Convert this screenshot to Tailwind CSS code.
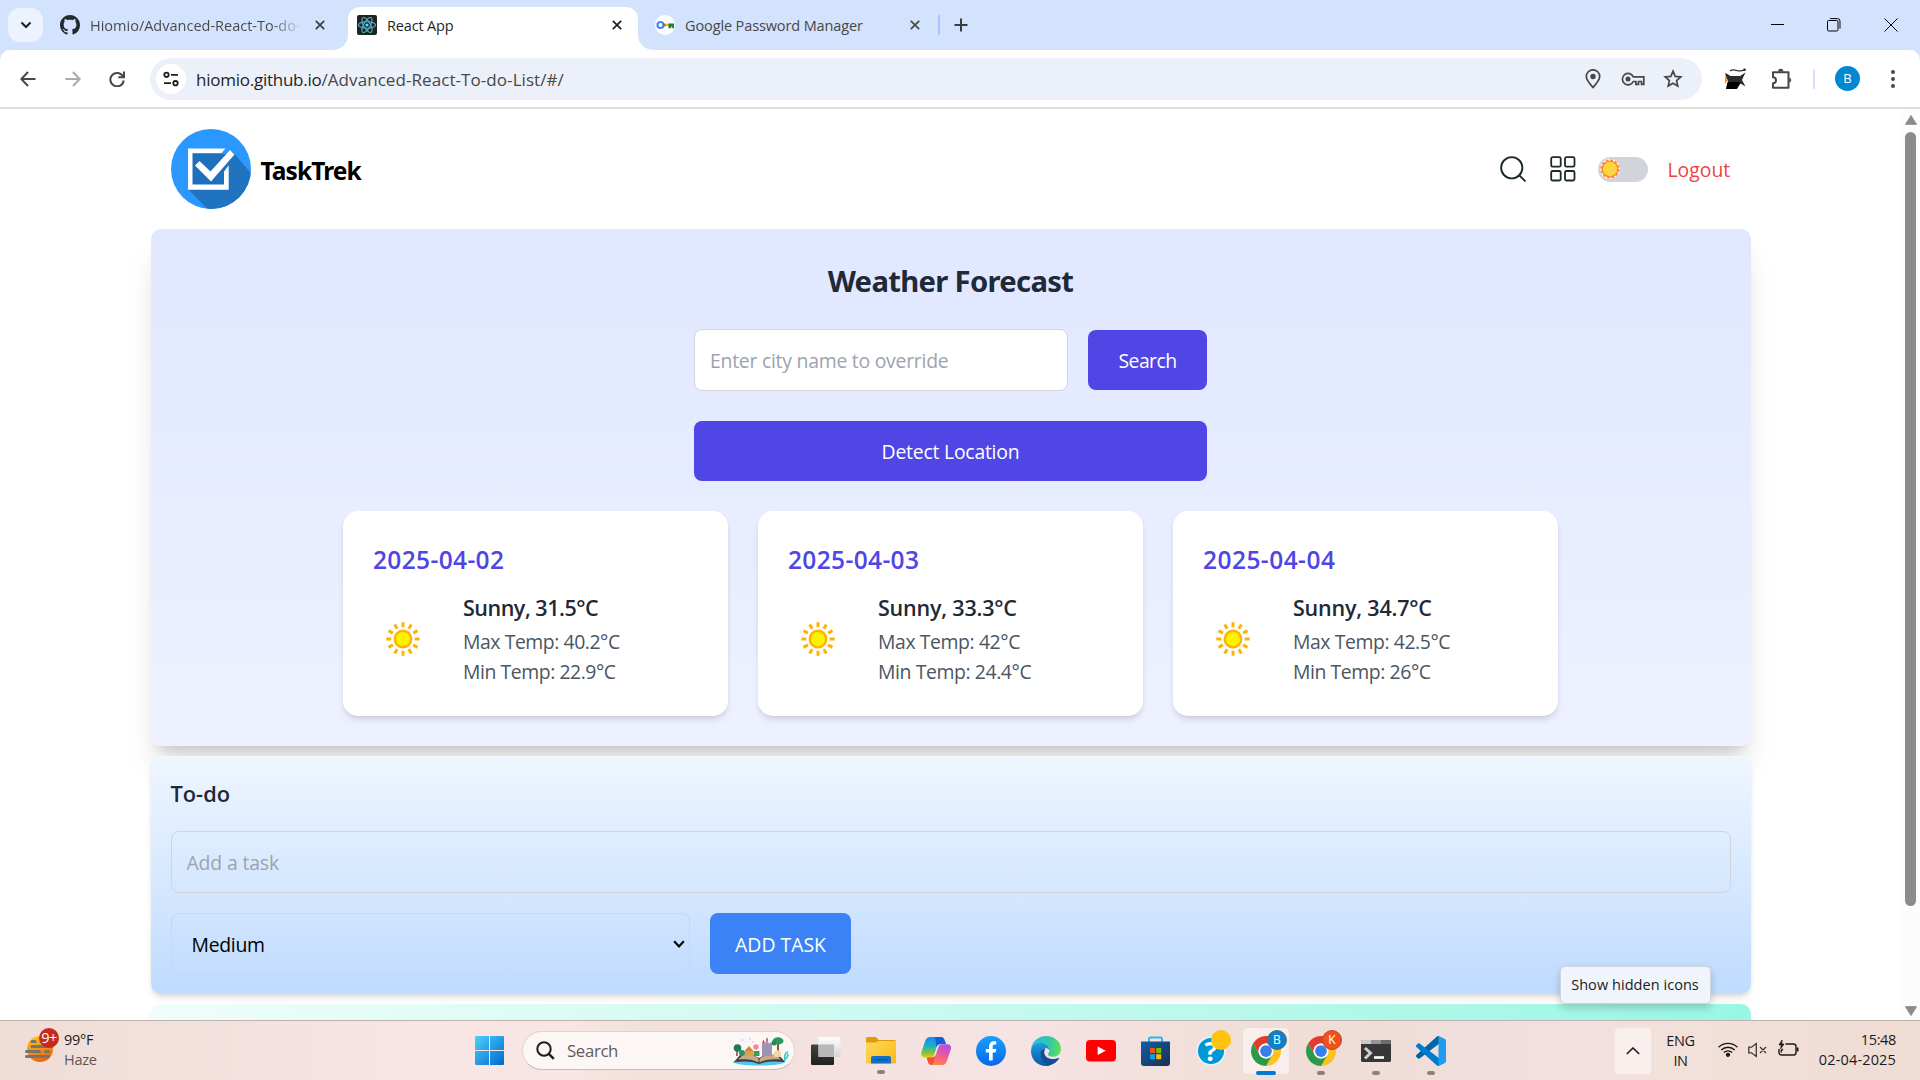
<!DOCTYPE html>
<html lang="en">
<head>
<meta charset="utf-8">
<title>React App</title>
<script src="https://cdn.jsdelivr.net/npm/@tailwindcss/browser@4"></script>
</head>
<body class="w-[1920px] h-[1080px] overflow-hidden bg-white font-['Open_Sans','Noto_Sans',sans-serif] flex flex-col">
<svg class="hidden">
  <symbol id="sun" viewBox="0 0 80 80">
    <g stroke="#ffb300" stroke-width="3">
      <path d="M40 23.3v5M40 51.7v5"/>
      <path d="M40 23.3v5M40 51.7v5" transform="rotate(30 40 40)"/>
      <path d="M40 23.3v5M40 51.7v5" transform="rotate(60 40 40)"/>
      <path d="M40 23.3v5M40 51.7v5" transform="rotate(90 40 40)"/>
      <path d="M40 23.3v5M40 51.7v5" transform="rotate(120 40 40)"/>
      <path d="M40 23.3v5M40 51.7v5" transform="rotate(150 40 40)"/>
    </g>
    <circle cx="40" cy="40" r="8.2" fill="#fff100" stroke="#ffb300" stroke-width="2.4"/>
  </symbol>
  <symbol id="chrome" viewBox="0 0 48 48">
    <path d="M3.22 12A24 24 0 0 1 44.78 12H24A12 12 0 0 0 13.61 30z" fill="#e33b2e"/>
    <path d="M44.78 12A24 24 0 0 1 24 48L34.39 30A12 12 0 0 0 24 12z" fill="#fcc31e"/>
    <path d="M24 48A24 24 0 0 1 3.22 12L13.61 30A12 12 0 0 0 34.39 30z" fill="#2b9a48"/>
    <circle cx="24" cy="24" r="12" fill="#fff"/><circle cx="24" cy="24" r="9.4" fill="#3b7ded"/>
  </symbol>
  <symbol id="x" viewBox="0 0 10 10"><path d="M.8.8l8.4 8.4M9.2.8L.8 9.2" stroke="currentColor" stroke-width="1.7" fill="none"/></symbol>
</svg>

<!-- Browser tab strip -->
<div class="h-[50px] shrink-0 bg-[#d3e3fd] flex items-stretch text-[14.5px] text-[#474747]">
  <div class="w-[348px] flex items-center pl-2">
    <div class="w-[35px] h-[34px] rounded-xl bg-[#ecf2fe] flex items-center justify-center">
      <svg class="w-3 h-3 text-[#1f1f1f]" viewBox="0 0 12 12"><path d="M1.5 3.5L6 8l4.500-4.500" fill="none" stroke="currentColor" stroke-width="2"/></svg>
    </div>
    <svg class="w-5 h-5 ml-[17px] shrink-0" viewBox="0 0 16 16" fill="#24292f"><path d="M8 0C3.580 0 0 3.580 0 8c0 3.540 2.290 6.530 5.470 7.590.4.070.550-.170.550-.380 0-.190-.010-.820-.010-1.490-2.010.370-2.530-.490-2.690-.940-.090-.230-.480-.940-.820-1.130-.280-.150-.680-.520-.010-.530.630-.010 1.080.580 1.230.820.720 1.210 1.870.870 2.330.660.070-.520.280-.870.510-1.070-1.780-.2-3.640-.890-3.640-3.950 0-.870.310-1.590.820-2.150-.080-.2-.360-1.020.080-2.120 0 0 .670-.210 2.200.820.640-.180 1.320-.270 2-.270s1.360.090 2 .270c1.530-1.040 2.200-.820 2.200-.820.440 1.100.160 1.920.080 2.120.510.560.820 1.270.820 2.150 0 3.070-1.870 3.750-3.650 3.950.290.250.540.730.540 1.480 0 1.070-.010 1.930-.010 2.200 0 .210.150.460.550.380A8.010 8.010 0 0 0 16 8c0-4.420-3.580-8-8-8z"/></svg>
    <span class="ml-[10px] w-[212px] whitespace-nowrap pt-px bg-linear-to-r from-[#474747] from-85% to-transparent to-100% bg-clip-text text-transparent">Hiomio/Advanced-React-To-do-</span>
    <svg class="w-[10px] h-[10px] ml-[13px] text-[#3c3c3c]"><use href="#x"/></svg>
  </div>
  <div class="relative w-[290px] mt-[7px] bg-white rounded-t-[12px] flex items-center pl-[9px] pb-[7px] text-[#1f1f1f]">
    <svg class="absolute bottom-0 -left-[15px] w-[15px] h-[15px]" viewBox="0 0 15 15"><path d="M15 0v15H0A15 15 0 0 0 15 0" fill="#fff"/></svg>
    <svg class="absolute bottom-0 -right-[15px] w-[15px] h-[15px]" viewBox="0 0 15 15"><path d="M0 0v15h15A15 15 0 0 1 0 0" fill="#fff"/></svg>
    <svg class="w-5 h-5" viewBox="0 0 20 20"><rect width="20" height="20" rx="2" fill="#222"/><g fill="none" stroke="#4fb8d3" stroke-width="1.1"><ellipse cx="10" cy="10" rx="8.500" ry="3.300"/><ellipse cx="10" cy="10" rx="8.500" ry="3.300" transform="rotate(60 10 10)"/><ellipse cx="10" cy="10" rx="8.500" ry="3.300" transform="rotate(120 10 10)"/></g><circle cx="10" cy="10" r="1.600" fill="#61dafb"/></svg>
    <span class="ml-[10px] w-[225px] tracking-[-0.17px] pt-px">React App</span>
    <svg class="w-[10px] h-[10px]"><use href="#x"/></svg>
  </div>
  <div class="flex items-center pl-[17px]">
    <svg class="w-5 h-5" viewBox="0 0 20 20"><circle cx="10" cy="10" r="10" fill="#fff"/><circle cx="5.500" cy="10" r="3" fill="none" stroke="#4285f4" stroke-width="2.200"/><path d="M8 8.800h3v2.400H8z" fill="#ea4335"/><path d="M10.500 8.800h3.500v2.400h-3.500z" fill="#fbbc04"/><path d="M13.500 8.600h5.500v4.600h-1.800v-1.800h-1v1.800h-2.700z" fill="#188038"/></svg>
    <span class="ml-[10px] w-[225px] tracking-[-0.12px] pt-px">Google Password Manager</span>
    <svg class="w-[10px] h-[10px]"><use href="#x"/></svg>
    <div class="w-[2px] h-5 bg-[#a8c7fa] ml-[18px]"></div>
    <svg class="w-[14px] h-[14px] ml-[14px]" viewBox="0 0 14 14"><path d="M7 .5v13M.5 7h13" stroke="#3c3c3c" stroke-width="2"/></svg>
  </div>
  <div class="ml-auto flex items-center pr-[22px] text-black">
    <svg class="w-[13px] h-[13px]" viewBox="0 0 13 13"><path d="M0 5.500h13" stroke="currentColor"/></svg>
    <svg class="w-[14px] h-[14px] ml-[43px]" viewBox="0 0 14 14" fill="none" stroke="currentColor"><rect x=".5" y="2.500" width="10.500" height="10.500" rx="1.200"/><path d="M3 .6h7.500a2.500 2.500 0 0 1 2.500 2.500v7.500"/></svg>
    <svg class="w-[14px] h-[14px] ml-[43px]" viewBox="0 0 14 14" stroke="currentColor"><path d="M.5.5l13 13M13.500.5l-13 13"/></svg>
  </div>
</div>

<!-- Toolbar -->
<div class="h-[59px] shrink-0 bg-[#d3e3fd]">
<div class="h-full bg-white rounded-t-[10px] border-b-2 border-[#dfdfdf] flex items-center pl-5 text-[#474747]">
  <svg class="w-4 h-4" viewBox="0 0 16 16" fill="none" stroke="currentColor" stroke-width="2"><path d="M15.500 8H1.500M8 1L1.300 8 8 15"/></svg>
  <svg class="w-4 h-4 ml-[29px] text-[#ababab]" viewBox="0 0 16 16" fill="none" stroke="currentColor" stroke-width="2"><path d="M.5 8h14M8 1l6.700 7L8 15"/></svg>
  <svg class="w-4 h-4 ml-[28px]" viewBox="0 0 16 16" fill="none" stroke="currentColor" stroke-width="2"><path d="M14 5.500A6.700 6.700 0 1 0 14.700 9.500"/><path d="M15 .5v5.700H9.300"/></svg>
  <div class="ml-[25px] w-[1552px] h-[42px] rounded-full bg-[#ecf0f9] flex items-center pl-[6px] pr-[19px]">
    <div class="w-[30px] h-[30px] rounded-full bg-white flex items-center justify-center">
      <svg class="w-4 h-4" viewBox="0 0 16 16" fill="none" stroke="#1f1f1f" stroke-width="1.800"><circle cx="3.500" cy="3.800" r="2.200"/><path d="M8 3.800h7M1 12.200h7"/><circle cx="12.500" cy="12.200" r="2.200"/></svg>
    </div>
    <div class="ml-[10px] text-[17px] tracking-[0.07px] whitespace-nowrap pt-[2px]"><span class="text-[#1f1f1f] tracking-[-0.25px]">hiomio.github.io</span>/Advanced-React-To-do-List/#/</div>
    <div class="ml-auto flex items-center">
      <svg class="w-[16px] h-[20px]" viewBox="0 0 16 20"><path d="M8 18.500C4 14 1.300 11 1.300 7.500a6.700 6.700 0 0 1 13.400 0C14.700 11 12 14 8 18.500z" fill="none" stroke="currentColor" stroke-width="1.700"/><circle cx="8" cy="7.500" r="2.700" fill="currentColor"/></svg>
      <svg class="w-[24px] h-[14px] ml-[20px]" viewBox="0 0 24 14"><path d="M12.300 4.800h10.500v7.500h-2.300V9.500h-3v2.800h-2.600V9.500h-2.600a5.700 5.700 0 1 1 0-4.700z" fill="none" stroke="currentColor" stroke-width="1.700"/><circle cx="7" cy="7" r="2.500" fill="currentColor"/></svg>
      <svg class="w-[20px] h-[20px] ml-[18px]" viewBox="0 0 20 20"><path d="M10 2.200l2.200 5.200 5.600.5-4.200 3.700 1.200 5.500L10 14.200l-4.800 2.900 1.200-5.500L2.200 7.900l5.600-.5z" fill="none" stroke="currentColor" stroke-width="1.700"/></svg>
    </div>
  </div>
  <svg class="w-[22px] h-[22px] ml-[23px]" viewBox="0 0 22 22"><path d="M0 5.500h1.500l4 2.500h9.500l5.500-3.500-3.500 7.500 3.500 6.500-5-3-3.500 5.500H1l3-6-2-3.500z" fill="#2b2b2b"/><path d="M2.500 14h13l-4 7H1z" fill="#000"/><path d="M5 3c4-3.500 8 2 14-1" stroke="#333" stroke-width="1.300" fill="none"/><circle cx="19.500" cy="1.800" r="1.300" fill="#222"/><path d="M0 8l3 4-3 4z" fill="#f9922a"/></svg>
  <svg class="w-[22px] h-[22px] ml-[23px]" viewBox="0 0 22 22"><path d="M3 4.200h15.500v15.500H3v-4.500a3 3 0 0 0 0-6z" fill="none" stroke="currentColor" stroke-width="2" stroke-linejoin="round"/><path d="M8 3.500a2.700 2.700 0 0 1 5.400 0zM19.300 9.500a2.700 2.700 0 0 1 0 5.200z" fill="currentColor"/></svg>
  <div class="w-[2px] h-5 bg-[#d3e3fd] ml-[21px]"></div>
  <div class="w-[25px] h-[25px] rounded-full bg-[#0288d1] text-white text-[13px] leading-none flex items-center justify-center ml-[20px]">B</div>
  <svg class="w-[4px] h-[18px] ml-[31px]" viewBox="0 0 4 18" fill="currentColor"><circle cx="2" cy="2" r="2"/><circle cx="2" cy="9" r="2"/><circle cx="2" cy="16" r="2"/></svg>
</div>
</div>

<!-- Page viewport -->
<div class="h-[911px] shrink-0 overflow-hidden flex bg-white">
  <main class="w-[1901px] px-[150.500px] flex flex-col gap-[10px]">
    <header class="h-[110px] shrink-0 px-5 pt-5 flex items-start">
      <svg class="w-20 h-20" viewBox="0 0 80 80"><defs><clipPath id="disc"><circle cx="40" cy="40" r="40"/></clipPath></defs><g clip-path="url(#disc)"><path d="M0 0h80v80H0z" fill="#2a98ff"/><path d="M61 22L90 56V90H46L17 60z" fill="#2074bf"/><path d="M21 25h34v32H21z" fill="#1d70bd"/></g><path d="M17 19.500h37.500L50.500 24H21.500v31.500H53V42.500l4.700-6v24.200H17z" fill="#fff"/><path d="M24 36.500l4.500-4.500L39.500 42.500 59 21l4.500 4.500L40 52.500z" fill="#fff"/></svg>
      <div class="ml-[10px] h-20 flex items-center pt-[5px] text-[24.500px] font-bold tracking-[-0.9px] text-black font-['Noto_Sans',sans-serif]">TaskTrek</div>
      <div class="ml-auto h-20 flex items-center text-[#1c2b22]">
        <svg class="w-[30px] h-[30px]" viewBox="0 0 24 24" fill="none" stroke="currentColor" stroke-width="1.500" stroke-linecap="round"><circle cx="11" cy="11" r="8.500"/><path d="M17.300 17.300l4.200 4.200"/></svg>
        <svg class="w-[26px] h-[26px] ml-[22px]" viewBox="0 0 26 26" fill="none" stroke="currentColor" stroke-width="1.800"><rect x="1.200" y="1.200" width="9.500" height="9.500" rx="1.500"/><rect x="15" y="1.200" width="9.500" height="9.500" rx="1.500"/><rect x="1.200" y="15" width="9.500" height="9.500" rx="1.500"/><rect x="15" y="15" width="9.500" height="9.500" rx="1.500"/></svg>
        <div class="ml-[22px] w-[50px] h-[25px] rounded-full bg-[#d1d5db] flex items-center pl-[2px]">
          <svg class="w-5 h-5" viewBox="0 0 20 20"><circle cx="10" cy="10" r="10" fill="#fff"/><circle cx="10" cy="10" r="8.900" fill="none" stroke="#ff8736" stroke-width="1.500" stroke-dasharray="2.800 1.860"/><circle cx="10" cy="10" r="7.900" fill="#fdd53f" stroke="#ff8736" stroke-width="1.400"/></svg>
        </div>
        <div class="ml-[20px] text-[19.400px] text-[#ef4444] pt-[2px] w-[63px]">Logout</div>
      </div>
    </header>

    <section class="h-[517px] shrink-0 rounded-[10px] bg-linear-to-b from-[#e0e7ff] to-[#eef2ff] shadow-[0_25px_31px_-6px_rgba(0,0,0,0.13),0_10px_12px_-7px_rgba(0,0,0,0.13)] flex flex-col items-center pt-[30px]">
      <h2 class="h-[45px] leading-[44px] text-[29.200px] font-bold tracking-[-0.66px] text-[#1f2937] font-['Noto_Sans',sans-serif]">Weather Forecast</h2>
      <div class="w-[513px] mt-[25px] flex items-center gap-5">
        <input placeholder="Enter city name to override" class="w-[374px] h-[62px] rounded-lg border border-[#d1d5db] bg-white px-[15px] pt-px text-[19.400px] tracking-[-0.25px] placeholder:text-[#9ca3af]">
        <button class="w-[119px] h-[60px] rounded-lg bg-[#4f46e5] text-white text-[19.400px] tracking-[-0.57px] pt-px">Search</button>
      </div>
      <button class="w-[513px] h-[60px] mt-[30px] shrink-0 rounded-lg bg-[#4f46e5] text-white text-[19.400px] tracking-[-0.23px] pt-px">Detect Location</button>
      <div class="flex gap-[30px] mt-[30px]">
        <article class="w-[385px] h-[205px] rounded-[15px] bg-white p-[30px] shadow-[0_5px_7px_-1px_rgba(0,0,0,0.1),0_2px_5px_-2px_rgba(0,0,0,0.1)]">
          <h3 class="h-[38px] leading-[38px] text-[24.500px] font-semibold tracking-[0.35px] text-[#4f46e5]">2025-04-02</h3>
          <div class="mt-[11px] -ml-[10px] flex items-center gap-5">
            <svg class="w-20 h-20"><use href="#sun"/></svg>
            <div class="text-[19.400px] leading-[30px] text-[#4b5563] tracking-[-0.44px]">
              <p class="h-[37px] leading-[35px] text-[21.500px] font-semibold text-[#1f2937] tracking-[-0.48px]">Sunny, 31.5°C</p><p>Max Temp: 40.2°C</p><p>Min Temp: 22.9°C</p>
            </div>
          </div>
        </article>
        <article class="w-[385px] h-[205px] rounded-[15px] bg-white p-[30px] shadow-[0_5px_7px_-1px_rgba(0,0,0,0.1),0_2px_5px_-2px_rgba(0,0,0,0.1)]">
          <h3 class="h-[38px] leading-[38px] text-[24.500px] font-semibold tracking-[0.35px] text-[#4f46e5]">2025-04-03</h3>
          <div class="mt-[11px] -ml-[10px] flex items-center gap-5">
            <svg class="w-20 h-20"><use href="#sun"/></svg>
            <div class="text-[19.400px] leading-[30px] text-[#4b5563] tracking-[-0.4px]">
              <p class="h-[37px] leading-[35px] text-[21.500px] font-semibold text-[#1f2937] tracking-[-0.2px]">Sunny, 33.3°C</p><p>Max Temp: 42°C</p><p>Min Temp: 24.4°C</p>
            </div>
          </div>
        </article>
        <article class="w-[385px] h-[205px] rounded-[15px] bg-white p-[30px] shadow-[0_5px_7px_-1px_rgba(0,0,0,0.1),0_2px_5px_-2px_rgba(0,0,0,0.1)]">
          <h3 class="h-[38px] leading-[38px] text-[24.500px] font-semibold tracking-[0.45px] text-[#4f46e5]">2025-04-04</h3>
          <div class="mt-[11px] -ml-[10px] flex items-center gap-5">
            <svg class="w-20 h-20"><use href="#sun"/></svg>
            <div class="text-[19.400px] leading-[30px] text-[#4b5563] tracking-[-0.42px]">
              <p class="h-[37px] leading-[35px] text-[21.500px] font-semibold text-[#1f2937] tracking-[-0.2px]">Sunny, 34.7°C</p><p>Max Temp: 42.5°C</p><p>Min Temp: 26°C</p>
            </div>
          </div>
        </article>
      </div>
    </section>

    <section class="relative h-[238px] shrink-0 rounded-[10px] bg-linear-to-b from-[#eff6ff] to-[#bfdbfe] shadow-[0_5px_7px_-1px_rgba(0,0,0,0.1),0_2px_5px_-2px_rgba(0,0,0,0.1)] p-5">
      <h2 class="h-[35px] leading-[36px] text-[21.800px] font-semibold tracking-[0px] text-[#1f2937]">To-do</h2>
      <input placeholder="Add a task" class="block mt-[20px] w-full h-[62px] rounded-[8px] border border-[#cfd4df] bg-transparent px-[15px] pt-px text-[19.400px] tracking-[-0.15px] placeholder:text-[#9ca3af]">
      <div class="mt-5 flex gap-5">
        <div class="w-[519px] h-[61px] rounded-[8px] border border-[#cbd6e8] flex items-center justify-between pl-[20px] pr-[4px] text-[19.400px] tracking-[-0.3px] text-black"><span class="pt-[3px]">Medium</span>
          <svg class="w-3 h-3" viewBox="0 0 12 12"><path d="M1.200 3.300L6 8.500l4.800-5.200" fill="none" stroke="#000" stroke-width="2.200"/></svg>
        </div>
        <button class="w-[141px] h-[61px] rounded-[8px] bg-[#3b82f6] text-white text-[19.400px] pt-[2px] pl-px">ADD TASK</button>
      </div>
    </section>
    <section class="relative h-20 shrink-0 rounded-[10px] bg-linear-to-r from-[#f0fdfa] to-[#99f6e4] shadow-[0_5px_7px_-1px_rgba(0,0,0,0.1)]"></section>
  </main>
  <div class="w-[19px] bg-[#fcfcfc] flex flex-col items-center pt-[6px] pb-[4px]">
    <svg class="w-3 h-[10px] shrink-0" viewBox="0 0 12 10"><path d="M6 .5L11.500 9.300H.5z" fill="#8b8b8b" stroke="#8b8b8b" stroke-linejoin="round"/></svg>
    <div class="w-[11px] h-[774px] mt-[7px] rounded-full bg-[#8b8b8b]"></div>
    <svg class="w-3 h-[10px] shrink-0 mt-auto" viewBox="0 0 12 10"><path d="M6 9.500L11.500.7H.5z" fill="#8b8b8b" stroke="#8b8b8b" stroke-linejoin="round"/></svg>
  </div>
</div>

<!-- Windows taskbar -->
<div class="relative h-[60px] shrink-0 border-t border-[#bdb1af] bg-[linear-gradient(90deg,#eeded6_0%,#f2e0dd_9%,#f8e5e4_22%,#f8e5e4_30%,#f3e1db_33%,#f4e0df_40%,#f6e3e3_53%,#efddd6_68%,#efdedb_76%,#f3dfdf_82%,#f2e0da_87%,#efddd4_100%)] flex items-center text-[14.500px] text-[#1b1b1b]">
  <div class="w-[475px] flex items-center pl-[25px]">
    <div class="relative w-[39px] h-[40px] -mt-[3px]">
      <svg class="w-[39px] h-[40px]" viewBox="0 0 39 40"><defs><linearGradient id="hz" x1="0" y1="0" x2=".4" y2="1"><stop offset="0" stop-color="#ffcc13"/><stop offset="1" stop-color="#ee6a10"/></linearGradient></defs><circle cx="15" cy="20" r="13" fill="url(#hz)"/><path d="M7 12.500h3M7 17.500h20M1.500 22.500h13M20.500 22.500h3M1.500 27.500h22" stroke="#747474" stroke-width="3" stroke-linecap="round"/></svg>
      <div class="absolute left-[14px] -top-[1px] w-5 h-5 rounded-full bg-[#c42b1c] text-white text-[14.500px] leading-none flex items-center justify-center tracking-[-0.5px]">9+</div>
    </div>
    <div class="leading-[20px] -mt-px tracking-[-0.25px]"><div>99°F</div><div class="text-[#5d5858]">Haze</div></div>
  </div>
  <svg class="w-[29px] h-[29px]" viewBox="0 0 29 29"><defs><linearGradient id="wn" gradientUnits="userSpaceOnUse" x1="0" y1="0" x2="29" y2="29"><stop offset="0" stop-color="#4fd0fb"/><stop offset="1" stop-color="#0068cf"/></linearGradient></defs><path d="M1 0h13v14H0V1a1 1 0 0 1 1-1zM15 0h13a1 1 0 0 1 1 1v13H15zM0 15h14v14H1a1 1 0 0 1-1-1zM15 15h14v13a1 1 0 0 1-1 1H15z" fill="url(#wn)"/></svg>
  <div class="ml-[18px] w-[273px] h-[39px] rounded-full bg-[#fcf6f5] border border-[#e3d2d0] border-b-[#c9bbb9] flex items-center pl-[13px] pr-[5px]">
    <svg class="w-[19px] h-[19px]" viewBox="0 0 19 19" fill="none" stroke="#1f1f1f" stroke-width="2"><circle cx="8" cy="8" r="6.700"/><path d="M12.800 12.800l5 5" stroke-width="2.400"/></svg>
    <span class="ml-[12px] text-[16.800px] tracking-[-0.35px] text-[#5f5b5b] pt-px">Search</span>
    <svg class="ml-auto w-[57px] h-[30px]" viewBox="0 0 57 30">
      <ellipse cx="27" cy="26" rx="26" ry="3.500" fill="#4fc8ec"/>
      <path d="M2 26l6-7c8-1 15 0 19 3 5-3 12-4 20-3l6 7c-9-1-19-1-26 2-7-3-15-3-25-2z" fill="#3f3d42"/>
      <path d="M6 23.500l5-4.500c7-1 12 0 16 4 5-4 10-5 17-4l5 4.500c-9-1-16 0-22 3-6-3-12-4-21-3z" fill="#c9a983"/>
      <path d="M27 22v5" stroke="#4a3a35"/>
      <path d="M5 20v-6" stroke="#7a4a21" stroke-width="1.500"/><circle cx="5.500" cy="12" r="3.800" fill="#1f7a57"/><circle cx="10" cy="17" r="3" fill="#2f9065"/>
      <path d="M13 20v-5l4-4 4 4v5z" fill="#e0a04a"/><path d="M12.500 15l4.500-5 4.500 5z" fill="#c98a3b"/>
      <circle cx="24" cy="11" r="2.700" fill="#f08a8a"/><path d="M21.500 20v-5h6v5z" fill="#3c9c5a"/>
      <path d="M30 20V8l1.500-4L33 8v0l2-6 2 6 1.500-2L40 8v12z" fill="#9c93b5"/><path d="M30 7l1.500-3.500L33 7zM33.800 4.500L35 1l1.200 3.500z" fill="#d0574c"/>
      <path d="M46 20V8" stroke="#8a5728" stroke-width="2"/><ellipse cx="46" cy="5" rx="5.500" ry="3.700" fill="#2a9a62"/><circle cx="42" cy="7" r="2.500" fill="#23875a"/><path d="M42 21v-5l3.500-2 3.500 2v5z" fill="#eed6a0"/>
      <path d="M53 25c-1-5 0-8 3-9M53 23c2-1 3-3 3-5" stroke="#35c6c9" stroke-width="1.500" fill="none"/>
      <circle cx="10" cy="4" r=".8" fill="#7cd4f2"/><circle cx="18" cy="3" r=".8" fill="#7cd4f2"/><circle cx="21" cy="6" r=".8" fill="#f1a5c0"/>
    </svg>
  </div>
  <svg class="ml-[16px] w-[30px] h-[28px]" viewBox="0 0 30 28"><defs><linearGradient id="tv" x1="0" y1="0" x2="0" y2="1"><stop offset="0" stop-color="#424242"/><stop offset="1" stop-color="#202020"/></linearGradient><linearGradient id="tw" x1="0" y1="0" x2="0" y2="1"><stop offset="0" stop-color="#fdfdfd"/><stop offset="1" stop-color="#d6d6d6"/></linearGradient></defs><rect y="7.500" width="23" height="20.500" rx="1.200" fill="url(#tv)"/><rect x="7.500" width="22" height="20" rx="1.200" fill="url(#tw)"/><path d="M7.500 7.500H23V20H7.500z" fill="#b8b8b8"/></svg>
  <div class="relative ml-[25px] w-[30px] h-[27px]">
    <svg class="w-[30px] h-[27px]" viewBox="0 0 30 27"><defs><linearGradient id="fd" x1="0" y1="0" x2="1" y2="1"><stop offset="0" stop-color="#ffda5e"/><stop offset="1" stop-color="#fab813"/></linearGradient></defs><path d="M0 1.500A1.500 1.500 0 0 1 1.500 0H10l2.500 3H28.500A1.500 1.500 0 0 1 30 4.500V8H0z" fill="#dc9c0c"/><path d="M0 5.500h10L12.500 4H30v21.500a1 1 0 0 1-1 1H1a1 1 0 0 1-1-1z" fill="url(#fd)"/><path d="M5 26.500V21a2 2 0 0 1 2-2h16a2 2 0 0 1 2 2v5.500z" fill="#0f72c8"/><path d="M8.500 22.700h13" stroke="#0a4f92" stroke-width="1.200"/></svg>
    <div class="absolute left-[11px] top-[33px] w-2 h-1 rounded-full bg-[#8b817e]"></div>
  </div>
  <svg class="ml-[25px] w-[30px] h-[28px]" viewBox="0 0 30 28"><defs><linearGradient id="c1" x1="0" y1="0" x2="0" y2="1"><stop offset="0" stop-color="#1b87f0"/><stop offset=".45" stop-color="#18b4c0"/><stop offset=".75" stop-color="#7fc23f"/><stop offset="1" stop-color="#f2c50f"/></linearGradient><linearGradient id="c2" x1=".7" y1="0" x2=".3" y2="1"><stop offset="0" stop-color="#b34fe8"/><stop offset=".5" stop-color="#ef5a95"/><stop offset="1" stop-color="#ff8b3d"/></linearGradient></defs><path d="M16 0h4c2 0 3 1.500 3.500 3L25 7h-5c-3 0-4 1.500-4.700 4l-2 6.500c-.6 2-1.500 3-4 3H4c-3 0-4.500-2-3.500-5.500L4 4.500C5 1.500 6.500 0 9 0z" fill="url(#c1)"/><path d="M14 0h6c2 0 3 1.500 3.500 3L25 7h-5c-2.500 0-3.700 1-4.500 3z" fill="#1560d8"/><path d="M14 28h-3.500c-2 0-3-1.500-3.500-3l-1.200-4.500h4.700c3 0 4-1.500 4.700-4l2-6c.6-2 1.500-3.300 4-3.300h5c3 0 4.500 2 3.500 5.500L26 23.500c-1 3-2.500 4.500-5 4.500z" fill="url(#c2)"/><path d="M11 28c-2 0-3.400-1.300-4-3l-1.200-4.500h4.700c2 0 3.300-.8 4-2L12.500 26z" fill="#f2513d"/></svg>
  <svg class="ml-[25px] w-[30px] h-[30px]" viewBox="0 0 30 30"><defs><linearGradient id="fb" x1="0" y1="0" x2="0" y2="1"><stop offset="0" stop-color="#1aa0fb"/><stop offset="1" stop-color="#0668e8"/></linearGradient></defs><circle cx="15" cy="15" r="15" fill="url(#fb)"/><path d="M13 24.500v-8H9.800v-3.600H13V11c0-3.800 1.800-5.700 5.200-5.700.8 0 1.500.1 2 .2v3.100h-1.600c-1.500 0-1.900.8-1.900 2v2.300h3.600l-.7 3.600h-2.900v8z" fill="#fff"/></svg>
  <svg class="ml-[25px] w-[30px] h-[30px]" viewBox="0 0 30 30"><defs><linearGradient id="e1" x1="0" y1=".5" x2="1" y2=".6"><stop offset="0" stop-color="#2fb8e8"/><stop offset=".6" stop-color="#35c9a5"/><stop offset="1" stop-color="#62e052"/></linearGradient><linearGradient id="e2" x1="0" y1="0" x2="0" y2="1"><stop offset="0" stop-color="#1b9ce2"/><stop offset="1" stop-color="#0c59a4"/></linearGradient></defs><path d="M.2 13C1 5.500 7.300 0 15 0c8.700 0 15 6 15 13 0 4.500-3.500 7.700-8 7.700-3.500 0-5.200-1.200-5.200-2.300 0-.7 1.500-1.400 1.500-3.900 0-3.500-4-6.300-9-6.300C5 8.200 1.500 10 .2 13z" fill="url(#e1)"/><path d="M0 15C0 10.500 4.500 7 9.500 7c5.300 0 8.800 3.500 8.800 7-1-1.300-2.800-2-4.500-1.500-3.800 1.200-5 6-2.800 10 2 3.800 6 5.700 9 6.500-2 1-4 1-5 1C6.500 30 0 23.500 0 15z" fill="url(#e2)"/><path d="M9.500 18c0 6 4.500 11.500 10 11 3.500-1 6.500-3.300 8.500-6.300.3-.6-.2-1-.8-.7-1.700.8-3.200 1.100-5.200 1.100-5 0-8.500-3-8.800-6.600 0-1.500.4-2.800 1.200-4-3 .3-4.900 2.700-4.900 5.500z" fill="#124e93"/></svg>
  <svg class="ml-[25px] w-[30px] h-[22px]" viewBox="0 0 30 22"><rect width="30" height="21.500" rx="4" fill="#f00"/><path d="M11.700 6.500l8 4.300-8 4.300z" fill="#fff"/></svg>
  <svg class="ml-[25px] w-[29px] h-[30px]" viewBox="0 0 29 30"><defs><linearGradient id="st" x1="0" y1="0" x2="1" y2="1"><stop offset="0" stop-color="#0f5ea8"/><stop offset="1" stop-color="#1c2f52"/></linearGradient></defs><path d="M8 6V3a1.500 1.500 0 0 1 1.500-1.500h10A1.500 1.500 0 0 1 21 3v3" fill="none" stroke="#2ab5ee" stroke-width="2"/><path d="M0 5.500h29V27a3 3 0 0 1-3 3H3a3 3 0 0 1-3-3z" fill="url(#st)"/><path d="M9 12h5v5H9z" fill="#f25022"/><path d="M15.200 12h5v5h-5z" fill="#7fba00"/><path d="M9 18.200h5v5H9z" fill="#00a4ef"/><path d="M15.200 18.200h5v5h-5z" fill="#ffb900"/></svg>
  <div class="relative ml-[26px] w-[30px] h-[30px]">
    <div class="w-[30px] h-[30px] rounded-full bg-[#0097d6] border-2 border-[#e3f2f8] text-white text-[27px] leading-none font-bold flex items-center justify-center">?</div>
    <div class="absolute left-[15px] -top-[6px] w-5 h-5 rounded-full bg-[#ffc20e]"></div>
  </div>
  <div class="relative ml-[16px] w-12 h-12 rounded-[5px] bg-[#f8efed] border border-[#eaddda] flex items-center justify-center">
    <svg class="w-[30px] h-[30px]"><use href="#chrome"/></svg>
    <div class="absolute left-[24px] top-[2px] w-5 h-5 rounded-full bg-[#0b82cb] border border-[#5d6b76] text-white text-[12px] leading-none flex items-center justify-center">B</div>
    <div class="absolute left-[13px] top-[43px] w-5 h-1 rounded-full bg-[#0078d4]"></div>
  </div>
  <div class="relative ml-[16px] w-[30px] h-[30px]">
    <svg class="w-[30px] h-[30px]"><use href="#chrome"/></svg>
    <div class="absolute left-[16px] -top-[6px] w-5 h-5 rounded-full bg-[#f0511e] border border-[#b04a2a] text-white text-[12px] leading-none flex items-center justify-center">K</div>
    <div class="absolute left-[11px] top-[35px] w-2 h-1 rounded-full bg-[#8b817e]"></div>
  </div>
  <div class="relative ml-[25px] w-[30px] h-[22px]">
    <svg class="w-[30px] h-[22px]" viewBox="0 0 30 22"><rect width="30" height="22" rx="1.500" fill="#373737"/><path d="M1.500 0H10v4H0V1.500A1.500 1.500 0 0 1 1.500 0z" fill="#c9c9c9"/><path d="M10 0h10v4H10z" fill="#959595"/><path d="M20 0h8.500A1.500 1.500 0 0 1 30 1.500V4H20z" fill="#6b6b6b"/><path d="M4 8l5.500 5L4 18.500" fill="none" stroke="#d0d0d0" stroke-width="3"/><path d="M13 17.500h10" stroke="#fff" stroke-width="2.600"/></svg>
    <div class="absolute left-[11px] top-[31px] w-2 h-1 rounded-full bg-[#8b817e]"></div>
  </div>
  <div class="relative ml-[25px] w-[30px] h-[30px]">
    <svg class="w-[30px] h-[30px]" viewBox="0 0 100 100"><path d="M96.500 10.800L75.900.9a6.200 6.200 0 0 0-7.100 1.200L1.300 63.600a4.200 4.200 0 0 0 0 6.200l5.500 5a4.200 4.200 0 0 0 5.300.2l81.300-61.700c2.700-2 6.600-.1 6.600 3.300v-.2a6.300 6.300 0 0 0-3.500-5.600z" fill="#0065a9"/><path d="M96.500 89.200L75.900 99.100a6.200 6.200 0 0 1-7.100-1.200L1.300 36.400a4.200 4.200 0 0 1 0-6.200l5.500-5a4.200 4.200 0 0 1 5.300-.2l81.300 61.700c2.700 2 6.600.1 6.600-3.300v.2a6.300 6.300 0 0 1-3.500 5.600z" fill="#007acc"/><path d="M75.900 99.100a6.200 6.200 0 0 1-7.100-1.200c2.300 2.300 6.200.7 6.200-2.600V4.700c0-3.300-3.900-4.900-6.200-2.600A6.200 6.200 0 0 1 75.900.9l20.600 9.900a6.300 6.300 0 0 1 3.500 5.600v67.200a6.300 6.300 0 0 1-3.500 5.600z" fill="#1f9cf0"/></svg>
    <div class="absolute left-[11px] top-[35px] w-2 h-1 rounded-full bg-[#8b817e]"></div>
  </div>
  <div class="ml-auto flex items-center pr-[24px]">
    <div class="w-[38px] h-12 rounded-[5px] bg-[#f9efed] border border-[#f1e4e2] flex items-center justify-center"><svg class="w-[14px] h-[8px]" viewBox="0 0 14 8"><path d="M.8 7L7 1l6.200 6" fill="none" stroke="#1b1b1b" stroke-width="1.600"/></svg></div>
    <div class="w-[57px] leading-[20px] text-center tracking-[-0.4px]"><div>ENG</div><div>IN</div></div>
    <svg class="w-5 h-[15px] ml-[9px] -mt-[3px]" viewBox="0 0 20 15" fill="none" stroke="#1b1b1b" stroke-width="1.300"><path d="M.6 5.200a13.300 13.300 0 0 1 18.800 0M3.300 8a9.500 9.500 0 0 1 13.400 0M5.800 10.500a6 6 0 0 1 8.400 0"/><circle cx="10" cy="12.800" r="1.500" fill="#1b1b1b"/></svg>
    <svg class="w-[19px] h-[16px] ml-[10px] -mt-px" viewBox="0 0 19 16" fill="none" stroke="#3b3736" stroke-width="1.300"><path d="M.8 5.200h2.700L8.300 1.500v13L3.500 10.800H.8zM12 5l6 6M18 5l-6 6"/></svg>
    <svg class="w-[21px] h-[18px] ml-[11px] -mt-[3px]" viewBox="0 0 21 18" fill="none" stroke="#1b1b1b" stroke-width="1.400"><path d="M7.500 4h8A2.500 2.500 0 0 1 18 6.500v6a2.500 2.500 0 0 1-2.500 2.500h-12A2.500 2.500 0 0 1 1 12.500V9"/><path d="M19.500 7.500v4" stroke-width="2"/><path d="M4 0L1 5h2.500L2.500 9 6 4H3.700zM3 10l2-1-2 3.500z" fill="#1b1b1b" stroke-width=".8"/></svg>
    <div class="w-[97px] leading-[20px] text-right -mt-[2px]"><div class="tracking-[-0.35px]">15:48</div><div class="tracking-[0.15px]">02-04-2025</div></div>
  </div>
  <div class="absolute left-[1560px] -top-[55px] w-[151px] h-[38px] rounded-[5px] bg-[#f0f5fc] border border-[#cdd5e0] shadow-[0_4px_8px_rgba(0,0,0,0.18)] flex items-center justify-center text-[#1b1b1b] tracking-[0.05px] pr-px">Show hidden icons</div>
</div>
</body>
</html>
